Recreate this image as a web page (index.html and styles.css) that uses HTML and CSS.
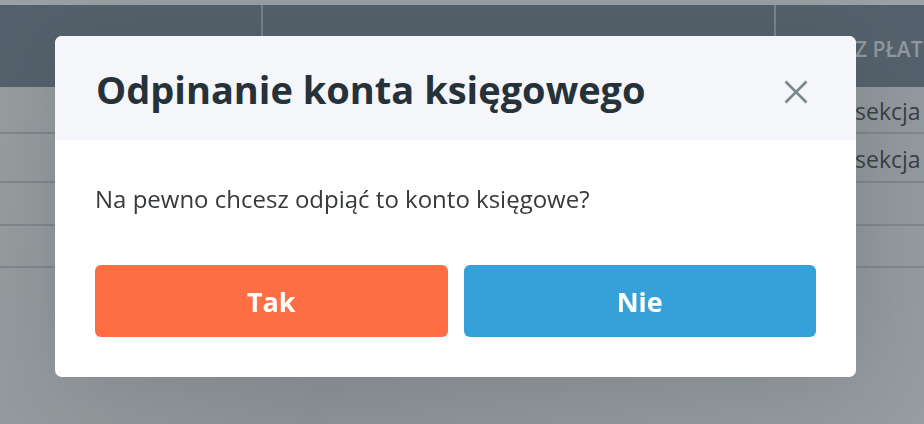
FILE: index.html
```html
<!DOCTYPE html>
<html lang="pl">
<head>
  <meta charset="UTF-8">
  <title>Odpinanie konta księgowego</title>
  <link rel="stylesheet" href="styles.css">
</head>
<body>
  <div class="page">
    <div class="topbar"></div>
    <div class="table-head">
      <div class="th th-first"></div>
      <div class="th th-mid"></div>
      <div class="th th-last">Z PŁAT</div>
    </div>
    <div class="row row-1"><div class="cell">sekcja</div></div>
    <div class="row row-2"><div class="cell">sekcja</div></div>
    <div class="row row-3"><div class="cell"></div></div>
    <div class="row row-4"><div class="cell"></div></div>
  </div>

  <div class="overlay">
    <div class="modal">
      <div class="modal-header">
        <h2 class="modal-title">Odpinanie konta księgowego</h2>
        <button class="modal-close" aria-label="Zamknij">
          <svg width="24" height="24" viewBox="0 0 24 24">
            <path d="M1.5 1.5 L22.5 22.5 M22.5 1.5 L1.5 22.5" stroke="#7b878b" stroke-width="2.6" fill="none"/>
          </svg>
        </button>
      </div>
      <div class="modal-body">
        <p class="modal-text">Na pewno chcesz odpiąć to konto księgowe?</p>
        <div class="modal-actions">
          <button class="btn btn-yes">Tak</button>
          <button class="btn btn-no">Nie</button>
        </div>
      </div>
    </div>
  </div>
</body>
</html>
```

FILE: styles.css
```css
body {
  margin: 0;
  padding: 0;
  font-family: 'Open Sans', sans-serif;
  background: #959b9e;
  overflow: hidden;
}

.page {
  height: 424px;
  background: linear-gradient(115deg, #9aa0a2 0%, #8c9296 45%, #969c9f 100%);
}

.topbar {
  height: 5px;
  background: #9ba1a4;
}

.table-head {
  display: flex;
  height: 82px;
  background: #55626d;
}

.th {
  height: 100%;
  flex-shrink: 0;
  border-right: 2px solid #7a858d;
}

.th-first {
  width: 261px;
}

.th-mid {
  width: 511px;
}

.th-last {
  flex: 1;
  min-width: 0;
  border-right: none;
  padding-left: 79px;
  display: flex;
  align-items: center;
  padding-top: 6px;
  box-sizing: border-box;
  color: #8f9aa1;
  font-size: 21px;
  font-weight: 600;
  white-space: nowrap;
}

.row {
  border-bottom: 2px solid #80878b;
  display: flex;
  align-items: center;
}

.row-1 { height: 45px; }
.row-2 { height: 47px; }
.row-3 { height: 41px; }
.row-4 { height: 40px; }

.cell {
  margin-left: 855px;
  padding-top: 2px;
  font-size: 23px;
  color: #394045;
  white-space: nowrap;
}

.overlay {
  position: fixed;
  inset: 0;
  padding: 36px 0 0 55px;
}

.modal {
  width: 801px;
  height: 341px;
  background: #ffffff;
  border-radius: 7px;
  overflow: hidden;
  box-shadow: 0 0 90px rgba(40, 48, 54, 0.18);
}

.modal-header {
  height: 104px;
  background: #f5f6fa;
  display: flex;
  align-items: center;
  justify-content: space-between;
  padding: 0 48px 0 41px;
}

.modal-title {
  margin: 0;
  padding-top: 2px;
  font-size: 38px;
  font-weight: 700;
  color: #26323a;
}

.modal-close {
  background: none;
  border: none;
  padding: 0;
  margin-top: 8px;
  cursor: pointer;
  display: flex;
}

.modal-body {
  padding: 42px 40px 40px;
}

.modal-text {
  margin: 0;
  font-size: 24px;
  line-height: 33px;
  color: #363a3d;
}

.modal-actions {
  display: flex;
  gap: 16px;
  margin-top: 50px;
}

.btn {
  flex: 1;
  height: 72px;
  border: none;
  border-radius: 6px;
  color: #ffffff;
  font-family: 'Open Sans', sans-serif;
  font-size: 27px;
  font-weight: 700;
  cursor: pointer;
}

.btn-yes {
  background: #ff6d42;
}

.btn-no {
  background: #36a0d8;
}
```
